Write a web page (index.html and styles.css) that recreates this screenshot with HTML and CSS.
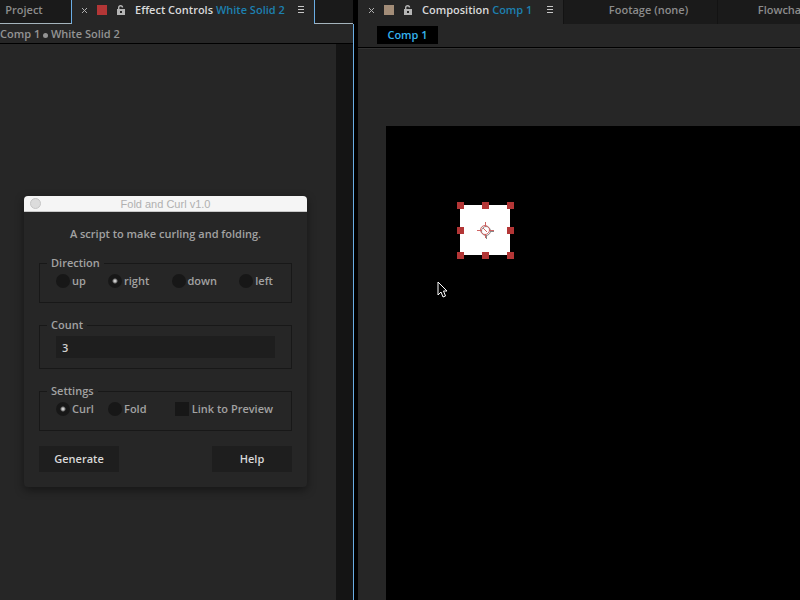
FILE: index.html
```html
<!DOCTYPE html>
<html lang="en">
<head>
<meta charset="utf-8">
<title>Fold and Curl</title>
<link rel="stylesheet" href="styles.css">
</head>
<body>
<div class="workspace">
  <section class="panel panel-effects">
    <div class="tabs">
      <button class="tab tab-project">Project</button>
      <div class="tab-active">
        <button class="icon-button" aria-label="Close"><svg width="7" height="7" viewBox="0 0 7 7"><path d="M1 1l5 5M6 1l-5 5" stroke="#b0b0b0"/></svg></button>
        <span class="swatch swatch-red"></span>
        <button class="icon-button" aria-label="Lock"><svg width="8" height="10" viewBox="0 0 8 10"><path d="M1.700 5V2.400Q1.700.8 3.600.8T5.500 2.600" fill="none" stroke="#b5b5b5" stroke-width="1.400"/><path fill="#b5b5b5" fill-rule="evenodd" d="M0 4h8v6H0zM3 6h2v2H3z"/></svg></button>
        <span class="tab-title">Effect Controls <span class="accent">White Solid 2</span></span>
        <button class="icon-button" aria-label="Panel menu"><svg width="6" height="8" viewBox="0 0 6 8"><path d="M0 .5h6M0 3.500h6M0 6.500h6" stroke="#c8c8c8"/></svg></button>
      </div>
      <div class="tab-space"></div>
    </div>
    <div class="panel-body">
      <div class="breadcrumb">Comp 1 <span class="dot"></span> White Solid 2</div>
      <div class="effects">
        <div class="scroll-track"></div>
      </div>
    </div>
  </section>
  <section class="panel panel-comp">
    <div class="tabs">
      <div class="tab-active">
        <button class="icon-button" aria-label="Close"><svg width="7" height="7" viewBox="0 0 7 7"><path d="M1 1l5 5M6 1l-5 5" stroke="#b0b0b0"/></svg></button>
        <span class="swatch swatch-tan"></span>
        <button class="icon-button" aria-label="Lock"><svg width="8" height="10" viewBox="0 0 8 10"><path d="M1.700 5V2.400Q1.700.8 3.600.8T5.500 2.600" fill="none" stroke="#b5b5b5" stroke-width="1.400"/><path fill="#b5b5b5" fill-rule="evenodd" d="M0 4h8v6H0zM3 6h2v2H3z"/></svg></button>
        <span class="tab-title">Composition <span class="accent">Comp 1</span></span>
        <button class="icon-button" aria-label="Panel menu"><svg width="6" height="8" viewBox="0 0 6 8"><path d="M0 .5h6M0 3.500h6M0 6.500h6" stroke="#c8c8c8"/></svg></button>
      </div>
      <button class="tab tab-viewer">Footage (none)</button>
      <button class="tab tab-viewer">Flowchart (none)</button>
    </div>
    <div class="comp-nav"><button class="comp-chip">Comp 1</button></div>
    <div class="viewer">
      <div class="stage">
        <svg class="layer" width="57" height="57" viewBox="0 0 57 57">
          <path fill="#fff" d="M3 3h50v50H3z"/>
          <path fill="#b33636" d="M0 0h7v7H0zM25 0h7v7h-7zM50 0h7v7h-7zM0 25h7v7H0zM50 25h7v7h-7zM0 50h7v7H0zM25 50h7v7h-7zM50 50h7v7h-7z"/>
          <g fill="none" stroke="#888">
            <circle cx="29" cy="29" r="4.500"/>
            <path d="M29.500 33v4M33 29.500h4"/>
          </g>
          <g fill="none" stroke="#cf6464">
            <circle cx="28" cy="28" r="4.500"/>
            <path d="M28.500 20v5M28.500 32v4M20 28.500h5M32 28.500h5M26 26l4 4"/>
          </g>
        </svg>
        <svg class="pointer" width="12" height="18" viewBox="0 0 12 18"><path d="M1 1v13l3-3 2 5 2.500-1-2-5H10z" fill="#000" stroke="#fff"/></svg>
      </div>
    </div>
  </section>
</div>

<form class="dialog">
  <header class="dialog-bar">
    <button type="button" class="dialog-close" aria-label="Close"></button>
    <span>Fold and Curl v1.0</span>
  </header>
  <div class="dialog-body">
    <p class="intro">A script to make curling and folding.</p>
    <fieldset class="group group-direction">
      <legend>Direction</legend>
      <div class="options">
        <label><input type="radio" name="direction">up</label>
        <label><input type="radio" name="direction" checked>right</label>
        <label><input type="radio" name="direction">down</label>
        <label><input type="radio" name="direction">left</label>
      </div>
    </fieldset>
    <fieldset class="group group-count">
      <legend><label for="count">Count</label></legend>
      <input class="count" id="count" type="text" value="3">
    </fieldset>
    <fieldset class="group group-settings">
      <legend>Settings</legend>
      <div class="options">
        <label><input type="radio" name="mode" checked>Curl</label>
        <label><input type="radio" name="mode">Fold</label>
        <label class="link"><input type="checkbox">Link to Preview</label>
      </div>
    </fieldset>
    <div class="actions">
      <button type="button">Generate</button>
      <button type="button">Help</button>
    </div>
  </div>
</form>
</body>
</html>
```
FILE: styles.css
```css
* { box-sizing: border-box; }

body {
  margin: 0;
  background: #000;
  color: #a2a2a2;
  font: 600 11px/16px "Open Sans", "Noto Sans", sans-serif;
  overflow: hidden;
}

button, input {
  margin: 0;
  padding: 0;
  border: 0;
  border-radius: 0;
  background: none;
  color: inherit;
  font: inherit;
}

svg { display: block; }

.workspace {
  display: grid;
  grid-template-columns: 354px 1fr;
  gap: 4px;
  height: 100vh;
}

.panel {
  display: flex;
  flex-direction: column;
  min-width: 0;
  background: #262626;
}

.tabs {
  display: flex;
  flex: none;
  height: 24px;
  overflow: hidden;
}

.tab {
  flex: none;
  padding-bottom: 4px;
  background: #1a1a1a;
  color: #8c8c8c;
}

.tab-project {
  width: 72px;
  padding-right: 23px;
  padding-bottom: 3px;
  border-right: 1px solid #6aade4;
  border-bottom: 1px solid #a5b4bd;
}

.tab-active {
  display: flex;
  align-items: center;
  flex: none;
  width: 242px;
  padding: 0 10px 4px 9px;
  color: #dadada;
}

.panel-comp .tab-active {
  width: 205px;
  padding-left: 10px;
}

.swatch {
  width: 10px;
  height: 10px;
  margin: 0 10px 0 9px;
}

.swatch-red { background: #b33636; }
.swatch-tan { background: #a38d78; }

.tab-title {
  flex: 1;
  margin-left: 10px;
  white-space: nowrap;
}

.accent { color: #1d80b0; }

.tab-space {
  flex: 1;
  margin-right: 1px;
  border-left: 1px solid #6aade4;
  border-bottom: 1px solid #a5b4bd;
  background: #1a1a1a;
}

.panel-effects .tabs { background: #000; }
.panel-effects .tab-active { background: #262626; }

.panel-body {
  display: flex;
  flex-direction: column;
  flex: 1;
  border-right: 1px solid #6aade4;
}

.breadcrumb {
  height: 20px;
  padding-top: 2px;
  border-bottom: 1px solid #000;
  color: #949494;
}

.dot {
  display: inline-block;
  width: 5px;
  height: 5px;
  border-radius: 50%;
  background: #949494;
}

.effects {
  display: flex;
  justify-content: flex-end;
  flex: 1;
}

.scroll-track {
  width: 17px;
  background: #141414;
}

.tab-viewer {
  width: 154px;
  padding-left: 16px;
  border-left: 1px solid #131313;
}

.comp-nav {
  flex: none;
  height: 24px;
  padding: 2px 0 0 19px;
  border-bottom: 1px solid #000;
}

.comp-chip {
  display: block;
  width: 61px;
  height: 18px;
  background: #000;
  color: #35b3ee;
}

.viewer {
  display: flex;
  flex: 1;
  padding: 77px 0 0 28px;
  border-top: 1px solid #333;
}

.stage {
  position: relative;
  flex: 1;
  background: #000;
}

.layer {
  position: absolute;
  left: 71px;
  top: 76px;
}

.pointer {
  position: absolute;
  left: 51px;
  top: 155px;
}

.dialog {
  position: absolute;
  left: 24px;
  top: 196px;
  width: 283px;
  border-radius: 4px;
  background: #262626;
  box-shadow: 0 3px 10px rgba(0, 0, 0, .45);
}

.dialog-bar {
  display: grid;
  grid-template-columns: 22px 1fr 22px;
  align-items: center;
  height: 16px;
  border-bottom: 1px solid #c8c8c8;
  border-radius: 4px 4px 0 0;
  background: #f5f5f5;
  color: #b0b0b0;
  font: 11px/14px "Liberation Sans", sans-serif;
  text-align: center;
}

.dialog-close {
  width: 11px;
  height: 11px;
  margin-left: 6px;
  border: 1px solid #c6c6c6;
  border-radius: 50%;
  background: #dcdcdc;
}

.dialog-body { padding: 14px 15px 15px; }

.intro {
  margin: 0 0 13px;
  text-align: center;
}

.group {
  min-width: 0;
  margin: 0 0 14px;
  padding: 0 16px;
  border: 1px solid #181818;
}

.group legend {
  margin-left: -9px;
  padding: 0 4px;
  height: 16px;
}

.group-direction, .group-settings { height: 48px; }
.group-count { height: 52px; }

.options {
  display: flex;
  align-items: center;
  justify-content: space-between;
  padding: 2px 2px 0 0;
}

.options label {
  display: flex;
  align-items: center;
  gap: 2px;
}

.options input {
  appearance: none;
  width: 14px;
  height: 14px;
  background: #171717;
}

.options input[type="radio"] { border-radius: 50%; }

.options input[type="radio"]:checked {
  background: radial-gradient(circle, #ccc 0 1px, #171717 3px);
}

.options .link { margin-left: 14px; gap: 3px; }

.count {
  display: block;
  width: 100%;
  height: 22px;
  margin-top: 3px;
  padding-left: 6px;
  background: #1e1e1e;
  color: #d0d0d0;
}

.actions {
  display: flex;
  justify-content: space-between;
  padding-top: 1px;
}

.actions button {
  width: 80px;
  height: 26px;
  background: #1e1e1e;
  color: #d8d8d8;
}
```
